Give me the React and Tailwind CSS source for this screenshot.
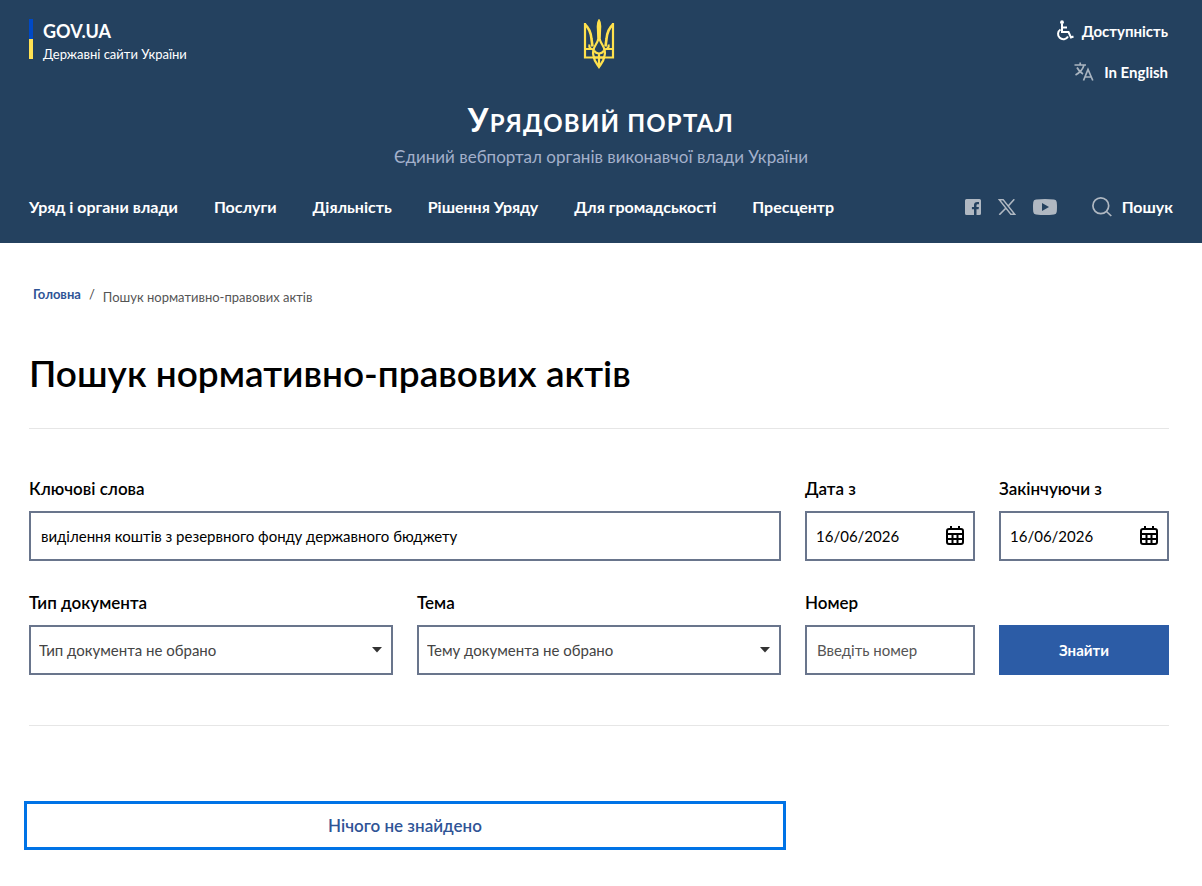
import React, { useState } from 'react';

const navItems = [
  'Уряд і органи влади',
  'Послуги',
  'Діяльність',
  'Рішення Уряду',
  'Для громадськості',
  'Пресцентр',
];

function Trident() {
  return (
    <svg width="32" height="50" viewBox="0 0 32 50" fill="none" stroke="#ffe14d" strokeWidth="2.200" aria-hidden="true">
      <path d="M2 4V38.500H30V4" />
      <path strokeWidth="2.600" d="M2 5.500C6 9 8 14 8.500 20L9.500 27.500M30 5.500C26 9 24 14 23.500 20L22.500 27.500" />
      <path d="M6.500 25.500C5.500 28.500 8 31 11.500 30M25.500 25.500C26.500 28.500 24 31 20.500 30M2 30H7.500M30 30H24.500" />
      <path fill="#ffe14d" strokeWidth="1.500" d="M16 1C14.500 3 14.200 6 14.600 10L15 21H17L17.400 10C17.800 6 17.500 3 16 1Z" />
      <path d="M15.200 20C14.800 25 8.500 28.500 10.300 36C11 42 13.500 44.500 16 48C18.500 44.500 21 42 21.700 36C23.500 28.500 17.200 25 16.800 20" />
      <path d="M11 31.500C12.500 34 14 34.500 16 34.500C18 34.500 19.500 34 21 31.500M16 34V47M10 38.500H22" />
    </svg>
  );
}

function WheelchairIcon() {
  return (
    <svg width="18" height="21" viewBox="0 0 18 21" fill="none" stroke="#fff" strokeWidth="2" aria-hidden="true">
      <circle cx="6" cy="2.200" r="1.900" fill="#fff" stroke="none" />
      <path d="M6 4V12H12.500L15 17.500L17.500 16.500" />
      <path d="M6 7.500H11" />
      <path d="M4.500 9.500A5.300 5.300 0 1 0 12 16.500" />
    </svg>
  );
}

function TranslateIcon() {
  return (
    <svg width="20" height="20" viewBox="0 0 20 20" fill="none" stroke="#a9b4c0" strokeWidth="1.700" aria-hidden="true">
      <path d="M0.500 3H12M6.200 0.500V3M10 3C9 7 6 10.500 1.500 13M3 5.500C4.500 8.500 6.500 10.500 9 12" />
      <path d="M9.500 18.500L14 7.500L18.800 18.500M11 15H17.300" />
    </svg>
  );
}

function FacebookIcon() {
  return (
    <svg width="16" height="16" viewBox="0 0 16 16" aria-hidden="true">
      <path
        fill="#b0b8c2"
        d="M1.500 0H14.500Q16 0 16 1.500V14.500Q16 16 14.500 16H11.500V10.200H13.600L13.900 7.900H11.500V6.400C11.500 5.600 11.800 5.200 12.700 5.200H14V3.100C13.600 3 13 2.900 12.200 2.900C10.200 2.900 9 4.100 9 6.100V7.900H6.900V10.200H9V16H1.500Q0 16 0 14.500V1.500Q0 0 1.500 0Z"
      />
    </svg>
  );
}

function XIcon() {
  return (
    <svg width="18" height="16" viewBox="0 0 18 16" fill="none" stroke="#b0b8c2" aria-hidden="true">
      <path strokeWidth="1.400" d="M1.300 0.700H5.200L16.700 15.300H12.800Z" />
      <path strokeWidth="1.600" d="M16.300 0.300L10 7.200M7.800 9.200L1.300 15.800" />
    </svg>
  );
}

function YoutubeIcon() {
  return (
    <svg width="24" height="16" viewBox="0 0 24 16" aria-hidden="true">
      <path fill="#b0b8c2" d="M3 0.500Q12 -0.500 21 0.500Q23.500 0.800 23.700 3Q24.300 8 23.700 13Q23.500 15.200 21 15.500Q12 16.500 3 15.500Q0.500 15.200 0.300 13Q-0.300 8 0.300 3Q0.500 0.800 3 0.500Z" />
      <path fill="#24415f" d="M9 4L16 8L9 12Z" />
    </svg>
  );
}

function SearchIcon() {
  return (
    <svg width="20" height="20" viewBox="0 0 20 20" fill="none" stroke="#b0b8c2" strokeWidth="1.700" aria-hidden="true">
      <circle cx="8.800" cy="8.800" r="7.900" />
      <path d="M14.500 14.500L19.300 19" />
    </svg>
  );
}

function CalendarIcon() {
  return (
    <svg width="18" height="20" viewBox="0 0 18 20" fill="none" stroke="#000" strokeWidth="2" aria-hidden="true">
      <rect x="1" y="3" width="16" height="15" rx="2" />
      <path d="M5 0V3M13 0V3M1 8H17M1 13H17M6.500 8V18M11.500 8V18" />
    </svg>
  );
}

const fieldClass = 'h-[50px] w-full border-2 border-[#69758c] bg-white text-[15px]';
const labelClass = 'mb-[10px] block text-[17px] leading-6 font-semibold text-black';

function DateField({ id, label, value, onChange }) {
  return (
    <div>
      <label htmlFor={id} className={labelClass}>{label}</label>
      <div className={`${fieldClass} flex items-center pr-[9px] pl-[9px]`}>
        <input
          id={id}
          type="text"
          className="min-w-0 flex-1 text-[15px] text-black focus:outline-none"
          value={value}
          onChange={e => onChange(e.target.value)}
        />
        <button type="button" aria-label={`${label}: календар`} className="cursor-pointer">
          <CalendarIcon />
        </button>
      </div>
    </div>
  );
}

function SelectField({ id, label, placeholder }) {
  return (
    <div className="col-span-2">
      <label htmlFor={id} className={labelClass}>{label}</label>
      <div className="relative">
        <select id={id} className={`${fieldClass} appearance-none px-2 text-[#444]`}>
          <option>{placeholder}</option>
        </select>
        <svg className="pointer-events-none absolute top-[22px] right-[11px]" width="10" height="6" viewBox="0 0 10 6" aria-hidden="true">
          <path fill="#333" d="M0 0H10L5 5.500Z" />
        </svg>
      </div>
    </div>
  );
}

function Header() {
  return (
    <header className="bg-[#24415f] px-[29px] text-white">
      <div className="flex items-start justify-between pt-[19px]">
        <a href="#" className="flex flex-1 gap-[10px]">
          <span className="flex h-10 w-1 flex-col">
            <span className="flex-1 bg-[#0049c6]" />
            <span className="flex-1 bg-[#ffe152]" />
          </span>
          <span className="flex flex-col pt-px">
            <span className="text-[18px] leading-[22px] font-bold">GOV.UA</span>
            <span className="text-[13px] leading-6">Державні сайти України</span>
          </span>
        </a>
        <Trident />
        <div className="flex flex-1 flex-col items-end gap-[21px] pt-px pr-[5px] text-[15px] leading-5 font-bold">
          <a href="#" className="flex items-center gap-2">
            <WheelchairIcon />
            Доступність
          </a>
          <a href="#" className="flex items-center gap-[10px]">
            <TranslateIcon />
            In English
          </a>
        </div>
      </div>
      <div className="pt-[18px] text-center">
        <p className="text-[24px] leading-10 font-bold tracking-wider uppercase first-letter:text-[32px]">Урядовий портал</p>
        <p className="pt-[2px] text-[17px] leading-6 text-[#a3b0cb]">Єдиний вебпортал органів виконавчої влади України</p>
      </div>
      <div className="flex items-center justify-between pt-[26px] pb-6">
        <nav className="flex gap-9 text-[16px] leading-6 font-bold">
          {navItems.map(item => (
            <a key={item} href="#" className="whitespace-nowrap">{item}</a>
          ))}
        </nav>
        <div className="flex items-center">
          <div className="flex items-center gap-[17px]">
            <a href="#" aria-label="Facebook"><FacebookIcon /></a>
            <a href="#" aria-label="X"><XIcon /></a>
            <a href="#" aria-label="YouTube"><YoutubeIcon /></a>
          </div>
          <button type="button" className="ml-[35px] flex cursor-pointer items-center gap-[10px] text-[16px] leading-6 font-bold">
            <SearchIcon />
            Пошук
          </button>
        </div>
      </div>
    </header>
  );
}

export default function App() {
  const [keywords, setKeywords] = useState('виділення коштів з резервного фонду державного бюджету');
  const [dateFrom, setDateFrom] = useState('16/06/2026');
  const [dateTo, setDateTo] = useState('16/06/2026');
  const [number, setNumber] = useState('');

  return (
    <div className="min-h-screen bg-white font-['Lato','Open_Sans',sans-serif]">
      <Header />
      <main className="pr-[33px] pb-9 pl-[29px]">
        <nav aria-label="breadcrumb" className="flex gap-2 pt-[41px] pl-1 text-[13px] leading-5">
          <a href="#" className="font-bold text-[#2f5496]">Головна</a>
          <span className="text-[#444]">/</span>
          <span className="pt-[3px] text-[#555]">Пошук нормативно-правових актів</span>
        </nav>
        <h1 className="pt-10 text-[37px] leading-[52px] font-semibold text-black">Пошук нормативно-правових актів</h1>

        <form
          className="mt-[29px] grid grid-cols-6 gap-x-6 gap-y-[30px] border-y border-[#e6e6e6] pt-12 pb-[50px]"
          onSubmit={e => e.preventDefault()}
        >
          <div className="col-span-4">
            <label htmlFor="keywords" className={labelClass}>Ключові слова</label>
            <input
              id="keywords"
              type="text"
              className={`${fieldClass} px-[10px] text-black`}
              value={keywords}
              onChange={e => setKeywords(e.target.value)}
            />
          </div>
          <DateField id="date-from" label="Дата з" value={dateFrom} onChange={setDateFrom} />
          <DateField id="date-to" label="Закінчуючи з" value={dateTo} onChange={setDateTo} />
          <SelectField id="doc-type" label="Тип документа" placeholder="Тип документа не обрано" />
          <SelectField id="topic" label="Тема" placeholder="Тему документа не обрано" />
          <div>
            <label htmlFor="number" className={labelClass}>Номер</label>
            <input
              id="number"
              type="text"
              className={`${fieldClass} px-[10px] text-black placeholder:text-[#555]`}
              placeholder="Введіть номер"
              value={number}
              onChange={e => setNumber(e.target.value)}
            />
          </div>
          <button type="submit" className="h-[50px] cursor-pointer self-end bg-[#2c5ca6] text-[15px] font-bold text-white">
            Знайти
          </button>
        </form>

        <div className="mt-[75px] grid grid-cols-3 gap-6">
          <div className="col-span-2 -mx-[5px] border-[3px] border-[#0073e6] py-[10px] text-center text-[17px] leading-[23px] font-semibold text-[#2f5496]">
            Нічого не знайдено
          </div>
        </div>
      </main>
    </div>
  );
}
